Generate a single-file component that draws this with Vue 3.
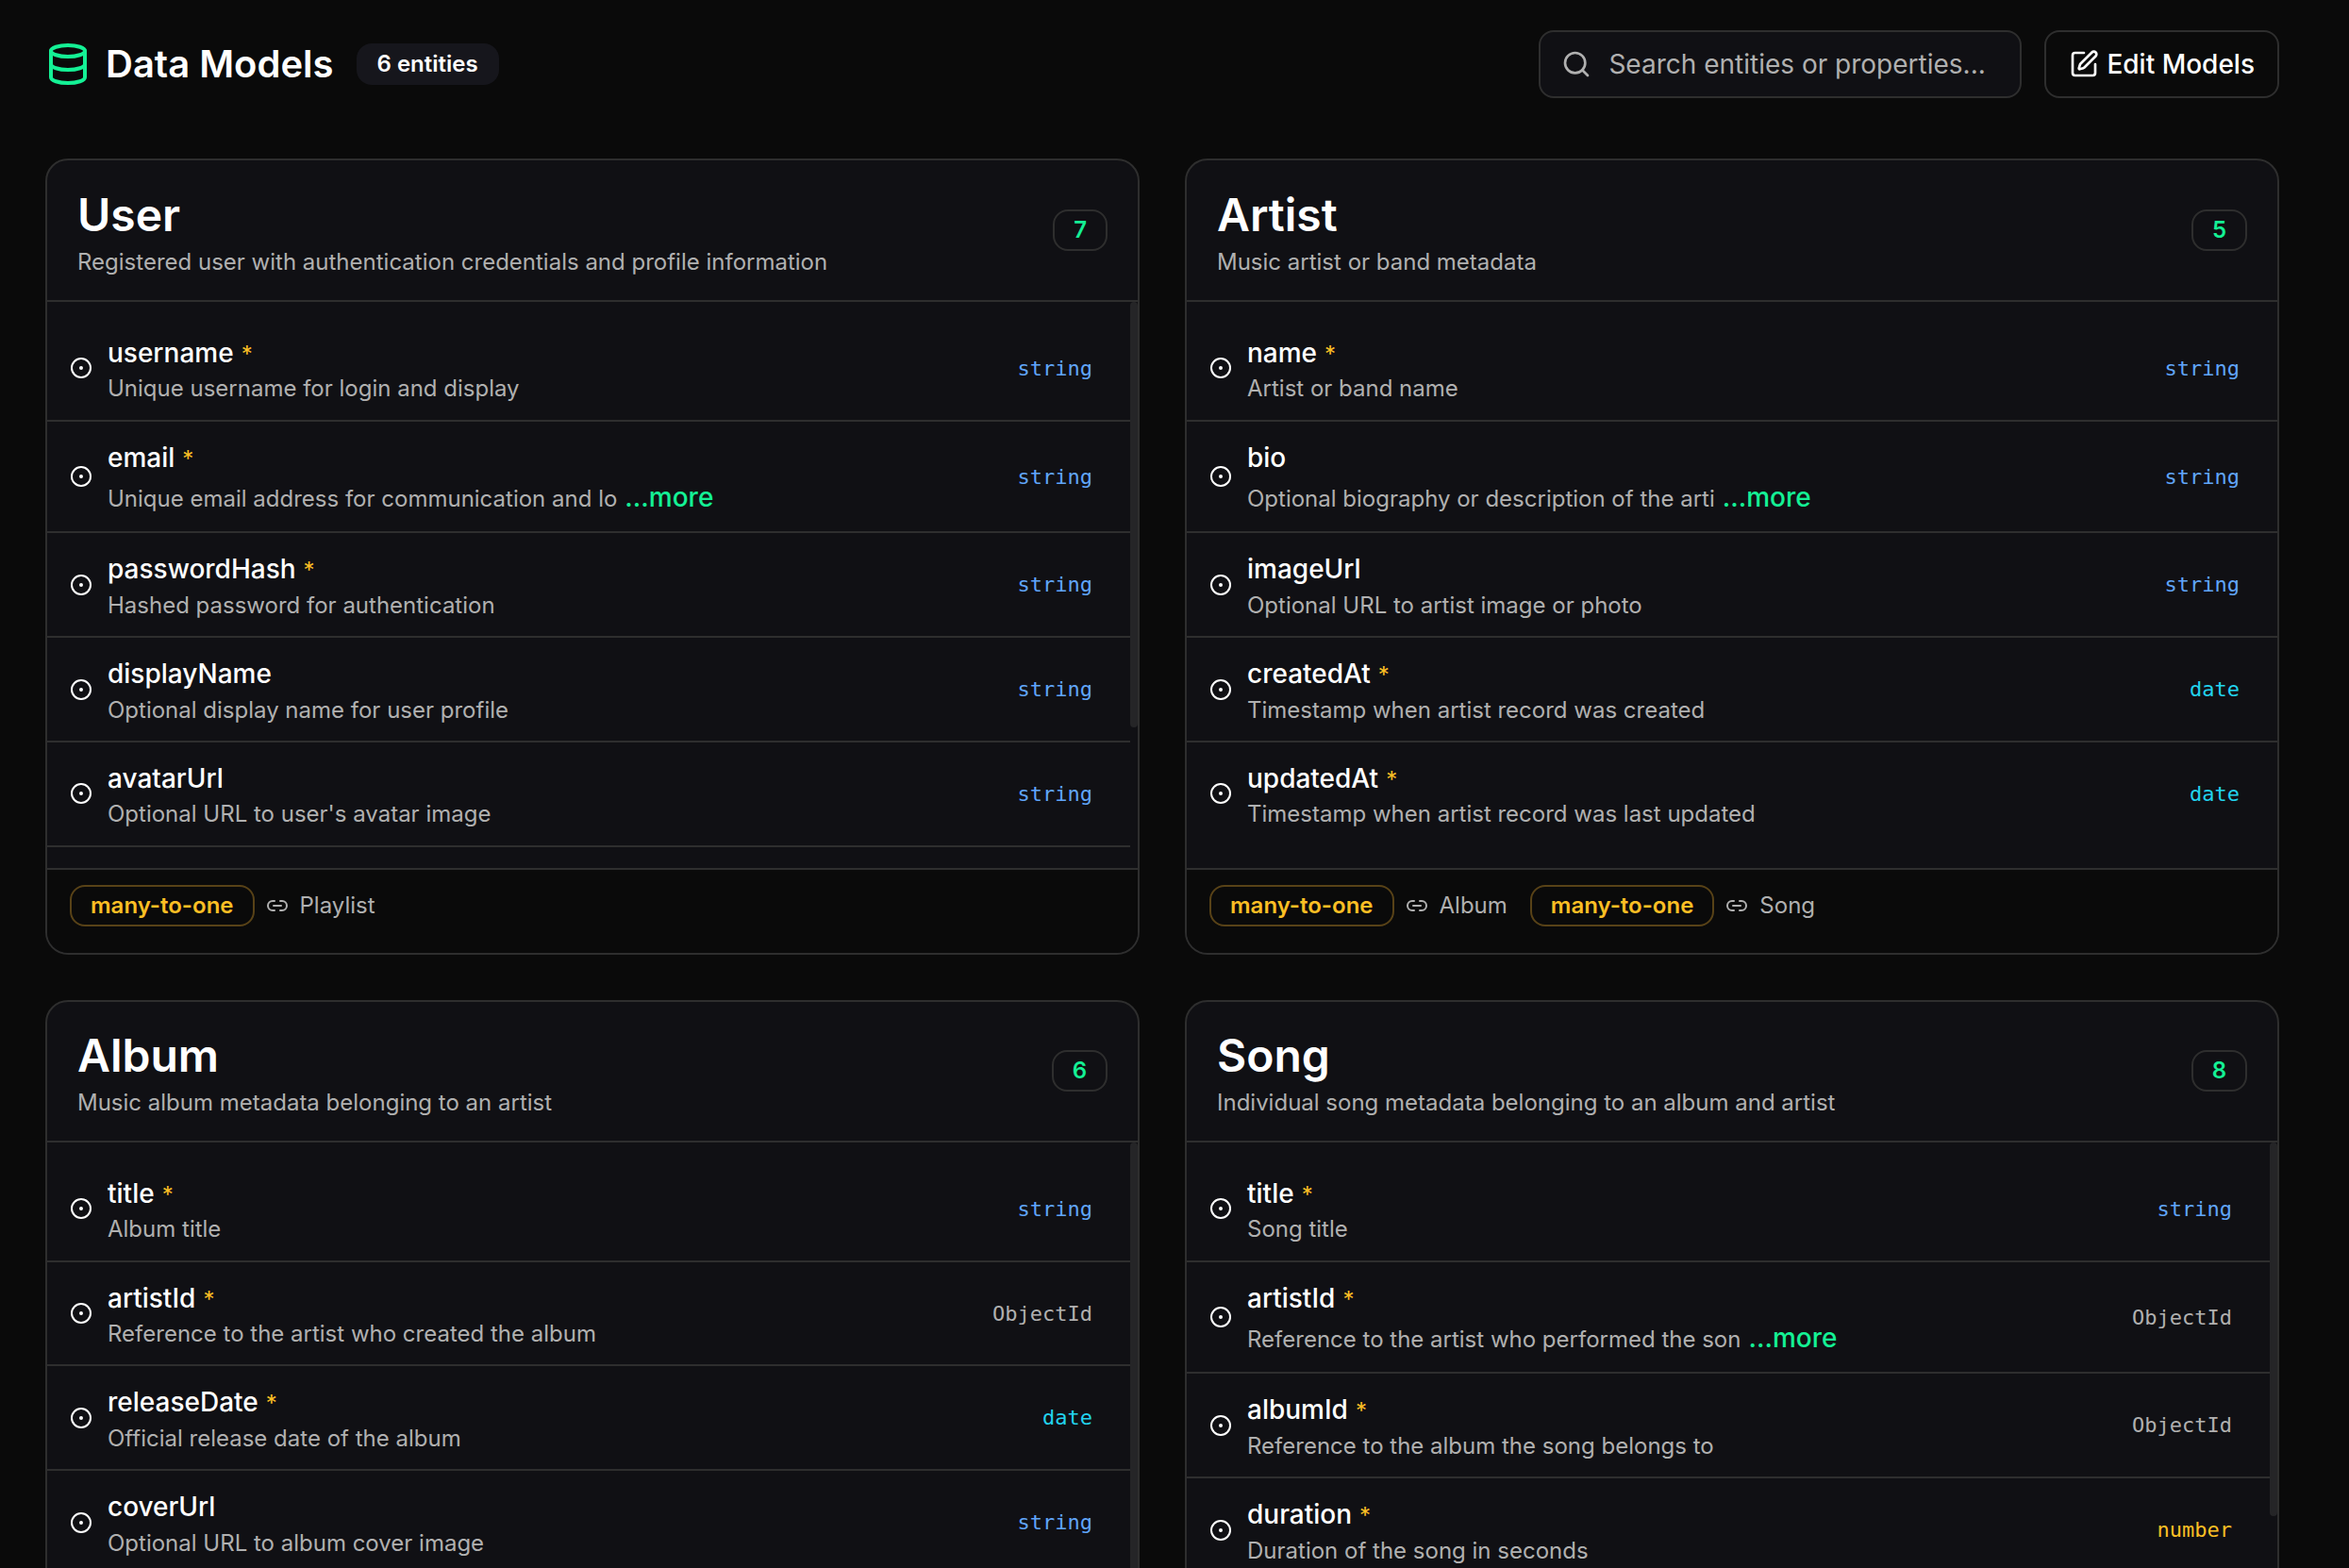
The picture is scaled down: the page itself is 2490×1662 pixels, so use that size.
<script setup>
const entities = [
  {
    name: 'User',
    about: 'Registered user with authentication credentials and profile information',
    count: 7,
    thumb: 451,
    fields: [
      { name: 'username', required: true, text: 'Unique username for login and display', type: 'string' },
      { name: 'email', required: true, text: 'Unique email address for communication and lo', more: true, type: 'string' },
      { name: 'passwordHash', required: true, text: 'Hashed password for authentication', type: 'string' },
      { name: 'displayName', text: 'Optional display name for user profile', type: 'string' },
      { name: 'avatarUrl', text: "Optional URL to user's avatar image", type: 'string' },
    ],
    relations: ['Playlist'],
  },
  {
    name: 'Artist',
    about: 'Music artist or band metadata',
    count: 5,
    thumb: 0,
    fields: [
      { name: 'name', required: true, text: 'Artist or band name', type: 'string' },
      { name: 'bio', text: 'Optional biography or description of the arti', more: true, type: 'string' },
      { name: 'imageUrl', text: 'Optional URL to artist image or photo', type: 'string' },
      { name: 'createdAt', required: true, text: 'Timestamp when artist record was created', type: 'date' },
      { name: 'updatedAt', required: true, text: 'Timestamp when artist record was last updated', type: 'date' },
    ],
    relations: ['Album', 'Song'],
  },
  {
    name: 'Album',
    about: 'Music album metadata belonging to an artist',
    count: 6,
    thumb: 516,
    fields: [
      { name: 'title', required: true, text: 'Album title', type: 'string' },
      { name: 'artistId', required: true, text: 'Reference to the artist who created the album', type: 'ObjectId' },
      { name: 'releaseDate', required: true, text: 'Official release date of the album', type: 'date' },
      { name: 'coverUrl', text: 'Optional URL to album cover image', type: 'string' },
    ],
    relations: [],
  },
  {
    name: 'Song',
    about: 'Individual song metadata belonging to an album and artist',
    count: 8,
    thumb: 396,
    fields: [
      { name: 'title', required: true, text: 'Song title', type: 'string' },
      { name: 'artistId', required: true, text: 'Reference to the artist who performed the son', more: true, type: 'ObjectId' },
      { name: 'albumId', required: true, text: 'Reference to the album the song belongs to', type: 'ObjectId' },
      { name: 'duration', required: true, text: 'Duration of the song in seconds', type: 'number' },
    ],
    relations: [],
  },
]
</script>

<template>
  <div class="page">
    <header class="topbar">
      <svg class="icon db" viewBox="0 0 24 24">
        <ellipse cx="12" cy="5" rx="9" ry="3" />
        <path d="M3 5v14a9 3 0 0 0 18 0V5" />
        <path d="M3 12a9 3 0 0 0 18 0" />
      </svg>
      <h1>Data Models</h1>
      <span class="total">6 entities</span>
      <div class="search">
        <svg class="icon" viewBox="0 0 24 24">
          <circle cx="11" cy="11" r="8" />
          <path d="m21 21-4.3-4.3" />
        </svg>
        <span>Search entities or properties...</span>
      </div>
      <button class="edit">
        <svg class="icon" viewBox="0 0 24 24">
          <path d="M12 3H5a2 2 0 0 0-2 2v14a2 2 0 0 0 2 2h14a2 2 0 0 0 2-2v-7" />
          <path d="M18.375 2.625a1 1 0 0 1 3 3l-9.013 9.014a2 2 0 0 1-.853.505l-2.873.84a.5.5 0 0 1-.62-.62l.84-2.873a2 2 0 0 1 .506-.852z" />
        </svg>
        <span>Edit Models</span>
      </button>
    </header>

    <main class="grid">
      <section v-for="e in entities" :key="e.name" class="card">
        <div class="head">
          <div class="intro">
            <h2>{{ e.name }}</h2>
            <p>{{ e.about }}</p>
          </div>
          <span class="count">{{ e.count }}</span>
        </div>
        <div class="body" :class="{ scrolls: e.thumb }">
          <ul>
            <li v-for="f in e.fields" :key="f.name">
              <svg class="icon dot" viewBox="0 0 24 24">
                <circle cx="12" cy="12" r="10" />
                <circle cx="12" cy="12" r="1" />
              </svg>
              <div class="field">
                <div class="name">{{ f.name }}<span v-if="f.required" class="star">*</span></div>
                <div class="desc">{{ f.text }}<span v-if="f.more" class="more">...more</span></div>
              </div>
              <code :class="f.type">{{ f.type }}</code>
            </li>
          </ul>
          <div v-if="e.thumb" class="track">
            <div class="thumb" :style="{ height: e.thumb + 'px' }"></div>
          </div>
        </div>
        <div class="foot">
          <div v-for="r in e.relations" :key="r" class="relation">
            <span class="kind">many-to-one</span>
            <svg class="icon link" viewBox="0 0 24 24">
              <path d="M9 17H7A5 5 0 0 1 7 7h2" />
              <path d="M15 7h2a5 5 0 1 1 0 10h-2" />
              <path d="M8 12h8" />
            </svg>
            <span>{{ r }}</span>
          </div>
        </div>
      </section>
    </main>
  </div>
</template>

<style>
body {
  background: #0a0a0a;
  overflow: hidden;
}
</style>

<style scoped>
.page {
  box-sizing: border-box;
  width: 2490px;
  height: 1662px;
  overflow: hidden;
  padding: 32px 74px 0 48px;
  background: #0a0a0a;
  color: #fff;
  font-family: Inter, 'Liberation Sans', sans-serif;
  font-size: 24px;
  line-height: 32px;
}
h1, h2, p, ul {
  margin: 0;
  padding: 0;
}
.icon {
  flex: none;
  width: 32px;
  height: 32px;
  fill: none;
  stroke: currentColor;
  stroke-width: 2;
  stroke-linecap: round;
  stroke-linejoin: round;
}
.topbar {
  display: flex;
  align-items: center;
  height: 72px;
}
.db {
  width: 48px;
  height: 48px;
  color: #14f195;
}
h1 {
  margin-left: 16px;
  font-size: 40px;
  line-height: 56px;
  font-weight: 600;
}
.total {
  box-sizing: border-box;
  height: 44px;
  margin-left: 24px;
  padding: 6px 22px;
  border-radius: 16px;
  background: #16161c;
  font-weight: 600;
}
.search, .edit {
  box-sizing: border-box;
  display: flex;
  align-items: center;
  height: 72px;
  border: 2px solid #2e2e2e;
  border-radius: 16px;
  font-size: 28px;
}
.search {
  width: 512px;
  margin-left: auto;
  padding-left: 22px;
  gap: 18px;
  background: #101014;
  color: #b0b0b0;
}
.edit {
  margin-left: 24px;
  padding: 0 24px;
  gap: 8px;
  background: transparent;
  color: #fff;
  font-family: inherit;
  font-weight: 500;
}
.grid {
  display: grid;
  grid-template-columns: 1160px 1160px;
  gap: 47.1px 48px;
  margin-top: 64.45px;
}
.card {
  box-sizing: border-box;
  display: flex;
  flex-direction: column;
  height: 844px;
  overflow: hidden;
  border: 2px solid #2e2e2e;
  border-radius: 24px;
  background: #101014;
}
.head {
  box-sizing: border-box;
  display: flex;
  flex: none;
  align-items: center;
  justify-content: space-between;
  height: 149.4px;
  padding: 0 32px;
  border-bottom: 2px solid #2e2e2e;
}
.intro {
  padding-top: 4.4px;
}
h2 {
  font-size: 48px;
  line-height: 60px;
  font-weight: 600;
}
.head p {
  color: #b0b0b0;
  margin-top: 4px;
}
.count, .kind {
  box-sizing: border-box;
  height: 44px;
  padding: 4px 20px;
  border: 2px solid #2e2e2e;
  border-radius: 16px;
  font-weight: 600;
}
.count {
  color: #14f195;
}
.body {
  display: flex;
  flex: none;
  height: 600px;
  overflow: hidden;
}
ul {
  flex: 1;
  list-style: none;
  padding-top: 16px;
}
li {
  display: flex;
  align-items: center;
  gap: 16px;
  padding: 0 40px 0 24px;
  border-bottom: 2px solid #2e2e2e;
}
.body:not(.scrolls) li:last-child {
  border-bottom: 0;
}
.dot {
  width: 24px;
  height: 24px;
}
.field {
  flex: 1;
  padding: 18px 0 16.4px;
}
.name {
  font-size: 28px;
  line-height: 40px;
  font-weight: 500;
}
.star {
  margin-left: 8px;
  color: #fbbf24;
  font-size: 24px;
  line-height: 1;
  font-weight: 400;
}
.desc {
  margin-top: 2.4px;
  color: #b0b0b0;
}
.more {
  margin-left: 8px;
  color: #14f195;
  font-size: 28px;
  line-height: 40px;
  font-weight: 500;
}
code {
  padding-top: 1px;
  font-family: 'DejaVu Sans Mono', monospace;
  font-size: 22px;
}
.string { color: #60a5fa; }
.date { color: #22d3ee; }
.number { color: #fbbf24; }
.ObjectId { color: #b0b0b0; }
.track {
  flex: none;
  width: 8px;
}
.thumb {
  border-radius: 4px;
  background: #252527;
}
.foot {
  box-sizing: border-box;
  display: flex;
  flex: 1;
  align-items: flex-start;
  gap: 24px;
  padding: 16px 24px;
  border-top: 2px solid #2e2e2e;
  background: #0a0a0a;
}
.relation {
  display: flex;
  align-items: center;
  gap: 12px;
  color: #b0b0b0;
}
.kind {
  border-color: #584217;
  color: #fbbf24;
}
.link {
  width: 24px;
  height: 24px;
}
</style>
